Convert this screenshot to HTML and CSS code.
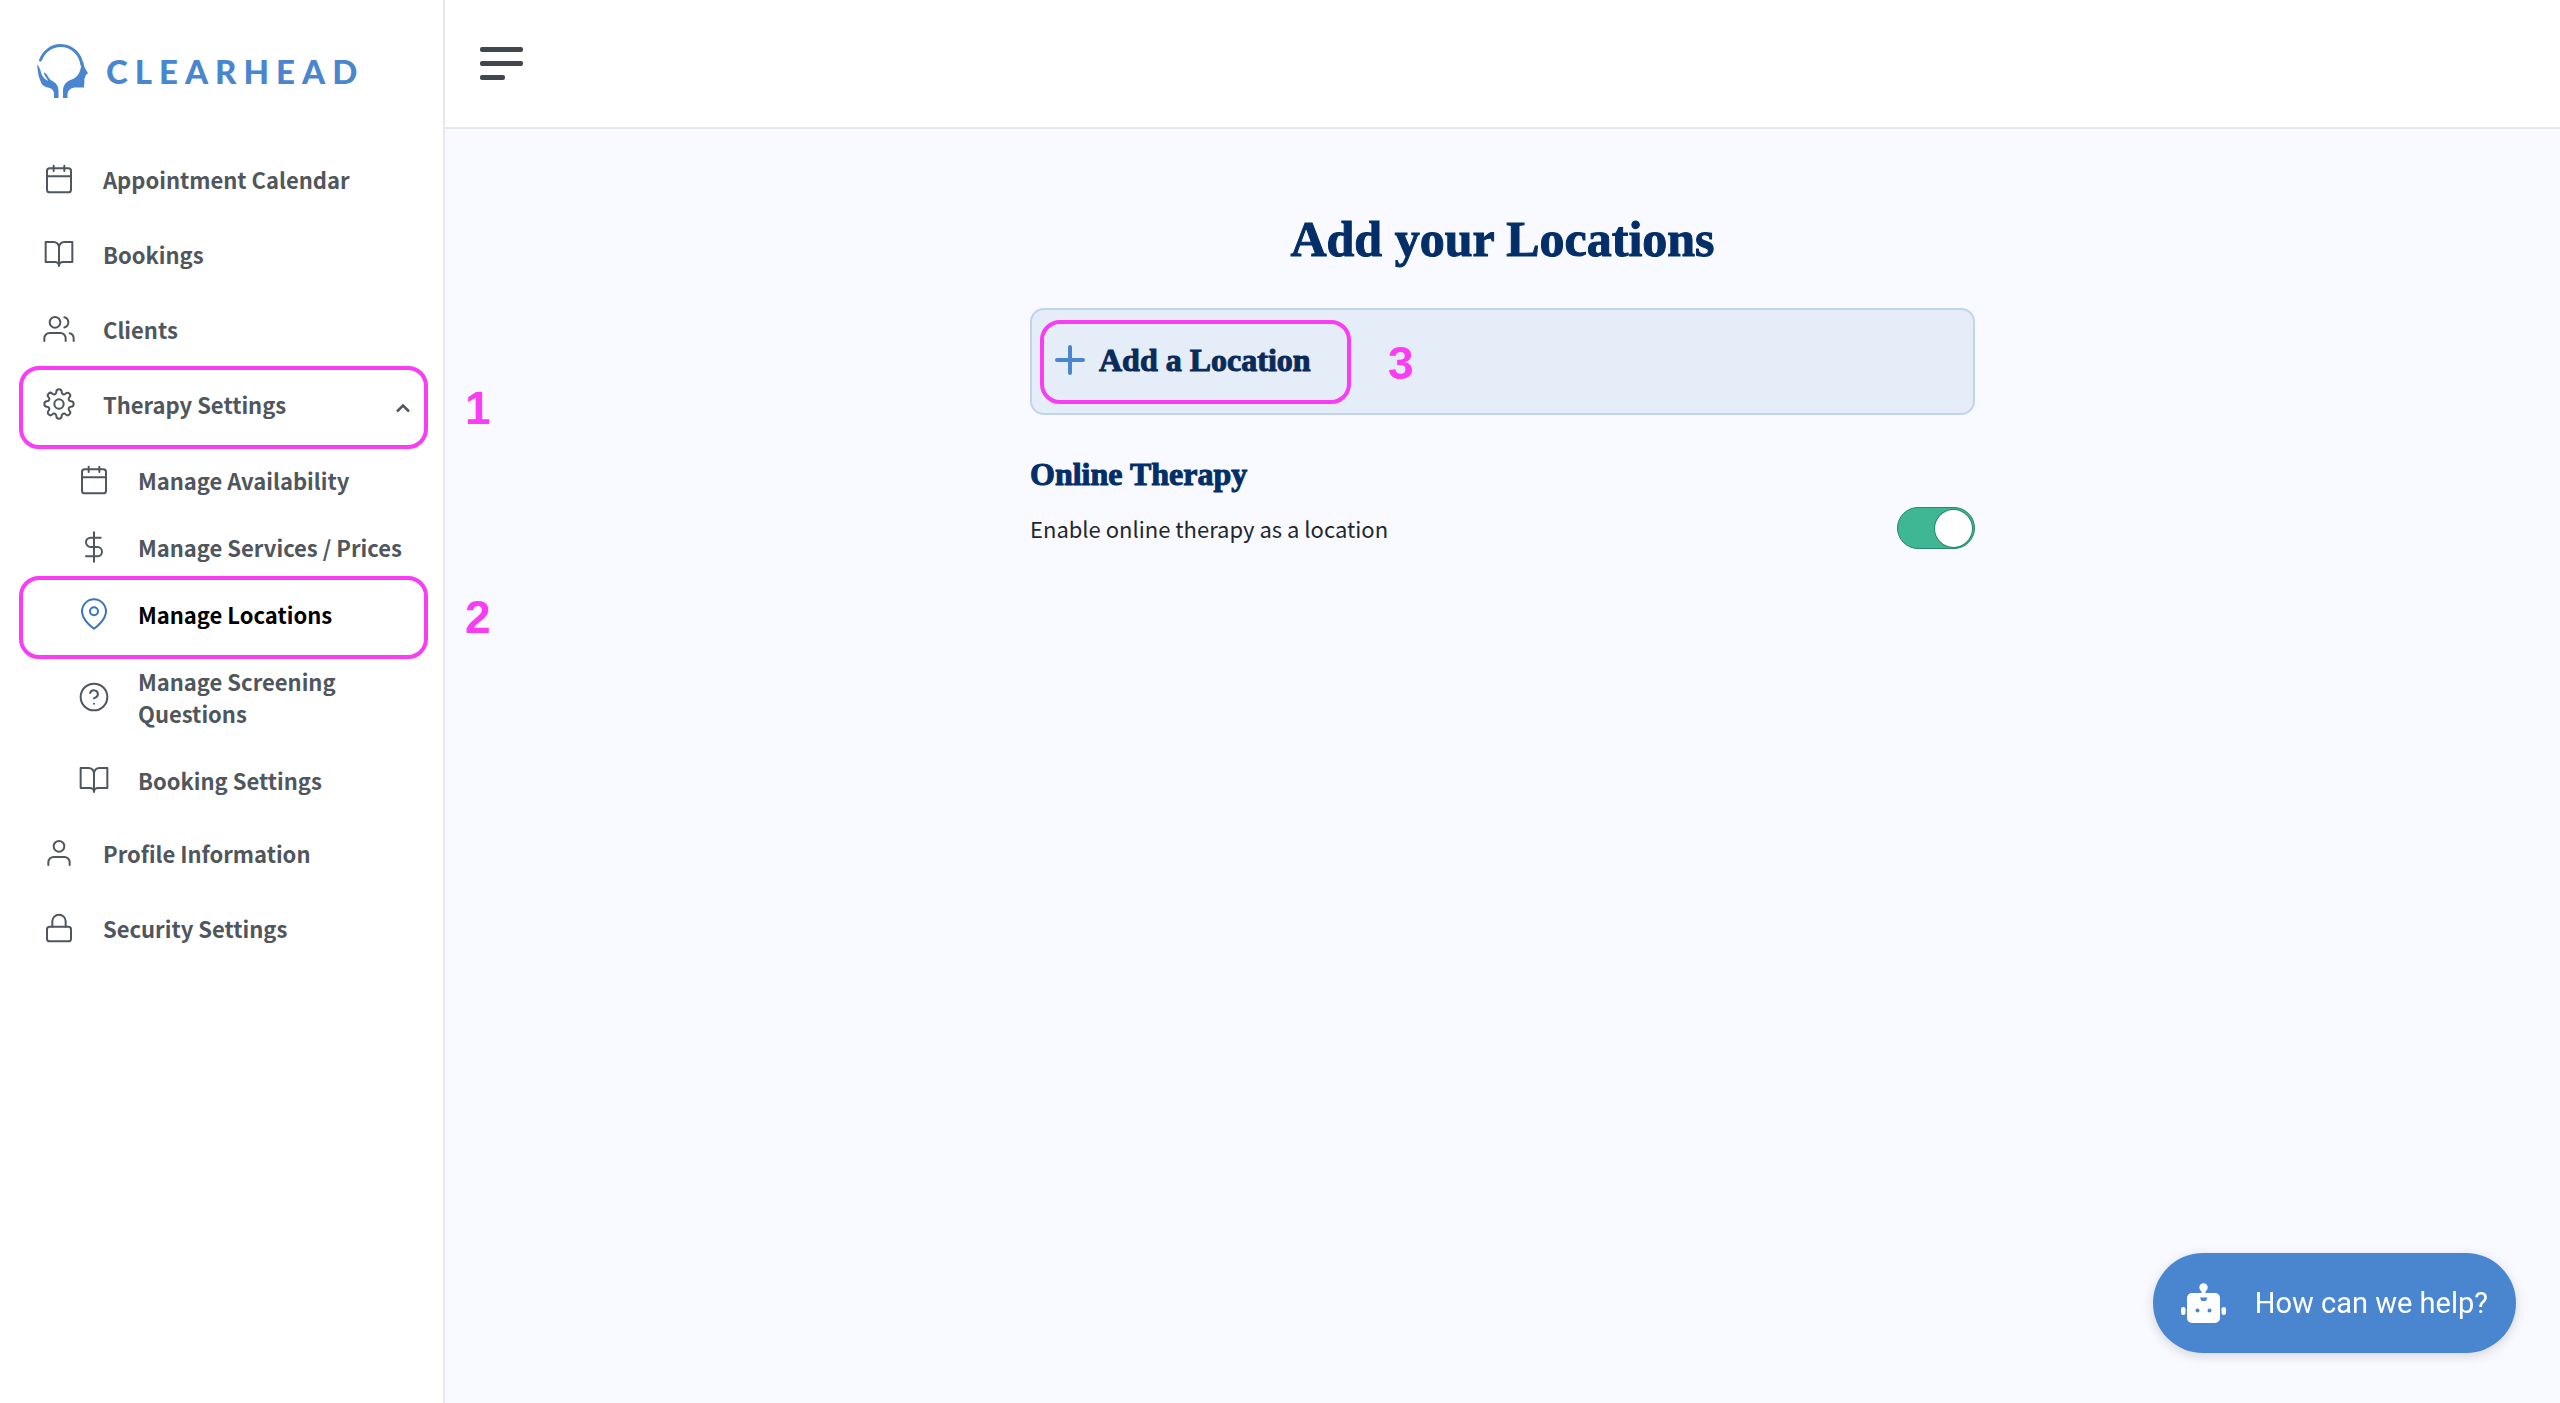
FILE: index.html
```html
<!doctype html>
<html lang="en">
  <head>
    <meta charset="utf-8">
    <meta name="viewport" content="width=device-width, initial-scale=1">
    <title>Clearhead - Manage Locations</title>
    <link rel="stylesheet" href="styles.css">
  </head>
  <body>

    <!-- feather icons shared by the menu -->
    <svg class="sprite" aria-hidden="true">
      <symbol id="calendar" viewBox="0 0 24 24"><rect x="3" y="4" width="18" height="18" rx="2"/><path d="M16 2v4M8 2v4M3 10h18"/></symbol>
      <symbol id="book" viewBox="0 0 24 24"><path d="M2 3h6a4 4 0 0 1 4 4v14a3 3 0 0 0-3-3H2zM22 3h-6a4 4 0 0 0-4 4v14a3 3 0 0 1 3-3h7z"/></symbol>
      <symbol id="users" viewBox="0 0 24 24"><path d="M17 21v-2a4 4 0 0 0-4-4H5a4 4 0 0 0-4 4v2M23 21v-2a4 4 0 0 0-3-3.870M16 3.130a4 4 0 0 1 0 7.750"/><circle cx="9" cy="7" r="4"/></symbol>
      <symbol id="gear" viewBox="0 0 24 24"><circle cx="12" cy="12" r="3.500"/><path d="M12 1c1.200 0 2 .900 2 2 0 1.600 1.900 2.400 3 1.200.8-.8 2-.8 2.800 0s.8 2 0 2.800C18.600 8.100 19.400 10 21 10c1.100 0 2 .8 2 2s-.9 2-2 2c-1.600 0-2.400 1.900-1.200 3 .8.8.8 2 0 2.800s-2 .8-2.800 0C15.900 18.600 14 19.400 14 21c0 1.100-.8 2-2 2s-2-.9-2-2c0-1.600-1.900-2.400-3-1.200-.8.8-2 .8-2.800 0s-.8-2 0-2.800C5.400 15.900 4.600 14 3 14c-1.100 0-2-.8-2-2s.9-2 2-2c1.600 0 2.400-1.900 1.200-3-.8-.8-.8-2 0-2.800s2-.8 2.800 0C8.100 5.400 10 4.600 10 3c0-1.100.8-2 2-2z"/></symbol>
      <symbol id="dollar" viewBox="0 0 24 24"><path d="M12 1v22M17 5H9.500a3.500 3.500 0 0 0 0 7h5a3.500 3.500 0 0 1 0 7H6"/></symbol>
      <symbol id="pin" viewBox="0 0 24 24"><path d="M21 10c0 7-9 13-9 13s-9-6-9-13a9 9 0 0 1 18 0z"/><circle cx="12" cy="10" r="3"/></symbol>
      <symbol id="help" viewBox="0 0 24 24"><circle cx="12" cy="12" r="10"/><path d="M9.090 9a3 3 0 0 1 5.830 1c0 2-3 3-3 3M12 17h.01"/></symbol>
      <symbol id="user" viewBox="0 0 24 24"><path d="M20 21v-2a4 4 0 0 0-4-4H8a4 4 0 0 0-4 4v2"/><circle cx="12" cy="7" r="4"/></symbol>
      <symbol id="lock" viewBox="0 0 24 24"><rect x="3" y="11" width="18" height="11" rx="2"/><path d="M7 11V7a5 5 0 0 1 10 0v4"/></symbol>
    </svg>

    <div class="app">
      <aside class="sidebar">
        <a class="logo" href="#">
          <svg class="logo-mark" viewBox="0 0 52 56" aria-hidden="true">
            <path d="M4.500 17C8 8 16 2.500 24.500 2.500 36 2.500 44.500 11 46 22" fill="none" stroke="currentColor" stroke-width="3" stroke-linecap="round"/>
            <path d="M47.200 18c.3 3 .8 5 2 7.500l2.600 4.500c.2 1-1.800 1.500-2.300 2.500.2 1.800-.8 2.300-1.200 3.500.5 2.500-.3 5-.3 8.500h-8c-5 0-8.500 2.500-8.500 7.500v3h-4.500v-7c0-5.500 2.500-9 7.500-11 5-1.500 9-5 10.500-13z"/>
            <path d="M1.200 21.500c2.500 2.500 3.300 6 4.300 9.500.8 2.500 3 5 6.500 7-.5-3-4-5-4-8.500 2.500.5 4 4.500 6.500 7.500 4.500 2 8 5 8 11v7h-4.500v-4c0-3-2-5.500-5-6.200-3.500-.6-6-2-7.200-3.800C4.500 38 2.200 33 2 29c-.3-3-.9-5-.8-7.500z"/>
          </svg>
          <span class="logo-text">CLEARHEAD</span>
        </a>

        <nav>
          <ul class="menu">
            <li><a class="item" href="#"><svg class="icon"><use href="#calendar"/></svg>Appointment Calendar</a></li>
            <li><a class="item" href="#"><svg class="icon"><use href="#book"/></svg>Bookings</a></li>
            <li><a class="item" href="#"><svg class="icon"><use href="#users"/></svg>Clients</a></li>
            <li class="marked">
              <button class="item" type="button" aria-expanded="true">
                <svg class="icon"><use href="#gear"/></svg>Therapy Settings
                <svg class="chevron" viewBox="0 0 16 10"><path d="M2 8.500l6-6 6 6"/></svg>
              </button>
              <span class="outline"></span><span class="step">1</span>
            </li>
          </ul>
          <ul class="menu submenu">
            <li><a class="item" href="#"><svg class="icon"><use href="#calendar"/></svg>Manage Availability</a></li>
            <li><a class="item" href="#"><svg class="icon"><use href="#dollar"/></svg>Manage Services / Prices</a></li>
            <li class="marked">
              <a class="item active" href="#"><svg class="icon"><use href="#pin"/></svg>Manage Locations</a>
              <span class="outline"></span><span class="step">2</span>
            </li>
            <li><a class="item" href="#"><svg class="icon"><use href="#help"/></svg>Manage Screening Questions</a></li>
            <li><a class="item" href="#"><svg class="icon"><use href="#book"/></svg>Booking Settings</a></li>
          </ul>
          <ul class="menu">
            <li><a class="item" href="#"><svg class="icon"><use href="#user"/></svg>Profile Information</a></li>
            <li><a class="item" href="#"><svg class="icon"><use href="#lock"/></svg>Security Settings</a></li>
          </ul>
        </nav>
      </aside>

      <div class="page">
        <header class="topbar">
          <button class="burger" type="button" aria-label="Toggle menu"><span></span><span></span><span></span></button>
        </header>

        <main class="content">
          <h1>Add your Locations</h1>

          <div class="card">
            <div class="marked">
              <button class="add" type="button">
                <svg class="plus" viewBox="0 0 30 30"><path d="M15 2v26M2 15h26"/></svg>Add a Location
              </button>
              <span class="outline"></span><span class="step">3</span>
            </div>
          </div>

          <h2>Online Therapy</h2>
          <div class="setting">
            <label for="online">Enable online therapy as a location</label>
            <input class="switch" type="checkbox" role="switch" id="online" checked>
          </div>
        </main>
      </div>
    </div>

    <button class="chat" type="button">
      <svg class="robot" viewBox="0 0 45 40" aria-hidden="true">
        <circle cx="22.500" cy="4.500" r="4.200"/>
        <rect x="20.500" y="6" width="4" height="6"/>
        <rect x="6" y="10" width="33" height="30" rx="5"/>
        <rect x="0" y="24" width="4.500" height="8" rx="2.200"/>
        <rect x="40.500" y="24" width="4.500" height="8" rx="2.200"/>
        <g class="face"><path d="M19 14.500h7.500l-1.500 3.500h-4.500z"/><circle cx="16.500" cy="27.500" r="2"/><circle cx="28.500" cy="27.500" r="2"/></g>
      </svg>
      How can we help?
    </button>

  </body>
</html>
```
FILE: styles.css
```css
* {
  box-sizing: border-box;
}

body {
  margin: 0;
  background: #f8faff;
  color: #23272c;
  font: 22px/32px 'Noto Sans CJK SC', 'Open Sans', sans-serif;
}

button {
  padding: 0;
  border: 0;
  background: none;
  font: inherit;
  color: inherit;
  text-align: left;
}

a {
  color: inherit;
  text-decoration: none;
}

h1, h2, .add {
  font-family: 'Liberation Serif', serif;
  font-weight: bold;
  color: #032e67;
  -webkit-text-stroke: 1px;
}

.sprite {
  position: absolute;
  width: 0;
  height: 0;
}

.app {
  display: flex;
  min-height: 100vh;
}

/* sidebar */

.sidebar {
  flex: none;
  width: 445px;
  background: #fff;
  border-right: 2px solid #e6e8ec;
}

.logo {
  display: flex;
  align-items: center;
  gap: 18px;
  padding: 43px 36px 0;
  color: #4a86cf;
}

.logo-mark {
  width: 52px;
  height: 56px;
  fill: currentColor;
}

.logo-text {
  font: 900 33px/56px Lato, sans-serif;
  letter-spacing: 7px;
}

nav {
  padding-top: 43px;
}

.menu {
  margin: 0;
  padding: 0;
  list-style: none;
}

.submenu {
  margin: 5px 0 2px;
}

.item {
  display: flex;
  align-items: center;
  gap: 28px;
  width: 100%;
  min-height: 75px;
  padding: 17px 28px 18px 43px;
  color: #50565d;
  font-weight: 600;
}

.submenu .item {
  min-height: 67px;
  padding-left: 78px;
}

.icon {
  flex: none;
  width: 32px;
  height: 32px;
  fill: none;
  stroke: currentColor;
  stroke-width: 1.5;
  stroke-linecap: round;
  stroke-linejoin: round;
}

.item.active {
  color: #000;
}

.active .icon {
  color: #3a74ba;
}

.chevron {
  width: 16px;
  height: 10px;
  margin: 8px 4px 0 auto;
  fill: none;
  stroke: #50565d;
  stroke-width: 2.5;
}

/* numbered callouts */

.marked {
  position: relative;
}

.outline {
  position: absolute;
  top: -1px;
  left: 19px;
  width: 409px;
  height: 83px;
  border: 4px solid #fb3cf5;
  border-radius: 20px;
  pointer-events: none;
}

.step {
  position: absolute;
  top: 17px;
  left: 465px;
  color: #fb3cf5;
  font: bold 46px/48px 'Liberation Sans', Arial, sans-serif;
}

.submenu .outline {
  top: -5px;
}

.submenu .step {
  top: 12px;
}

/* page */

.page {
  flex: 1;
}

.topbar {
  display: flex;
  align-items: center;
  height: 129px;
  padding-left: 35px;
  background: #fff;
  border-bottom: 2px solid #e6e8ec;
}

.burger {
  display: grid;
  gap: 9px;
}

.burger span {
  width: 43px;
  height: 5px;
  border-radius: 2px;
  background: #42474d;
}

.burger span:last-child {
  width: 25px;
}

.content {
  max-width: 945px;
  margin: 0 auto;
  padding-top: 78px;
}

h1 {
  margin: 0 0 37px;
  font-size: 50px;
  line-height: 64px;
  text-align: center;
}

.card {
  display: flex;
  padding: 10px 8px 9px;
  background: #e5edf8;
  border: 2px solid #c1d4eb;
  border-radius: 14px;
}

.add {
  display: flex;
  align-items: center;
  gap: 14px;
  width: 311px;
  height: 84px;
  padding: 0 0 4px 15px;
  color: #0a2a5a;
  font-size: 32px;
}

.plus {
  width: 30px;
  height: 30px;
  fill: none;
  stroke: #4a86cf;
  stroke-width: 4;
  stroke-linecap: round;
}

.card .outline {
  top: 0;
  left: 0;
  width: 100%;
  height: 100%;
}

.card .step {
  top: 19px;
  left: 348px;
}

h2 {
  margin: 39px 0 13px;
  font-size: 32px;
  line-height: 40px;
}

.setting {
  display: flex;
  align-items: center;
  justify-content: space-between;
}

.switch {
  appearance: none;
  display: flex;
  align-items: center;
  width: 78px;
  height: 42px;
  margin: 0;
  padding: 0 2px;
  background: #b8bec6;
  border: 1px solid #8d949c;
  border-radius: 21px;
}

.switch::before {
  content: '';
  width: 37px;
  height: 37px;
  border-radius: 50%;
  background: #fff;
}

.switch:checked {
  justify-content: flex-end;
  background: #3fb795;
  border-color: #268a6b;
}

.switch:checked::before {
  box-shadow: 0 0 0 1px #268a6b;
}

/* help bubble */

.chat {
  position: fixed;
  right: 44px;
  bottom: 50px;
  display: flex;
  align-items: center;
  gap: 29px;
  height: 100px;
  padding: 0 28px;
  border-radius: 50px;
  background: #4a86cf;
  box-shadow: 0 3px 12px rgba(0, 0, 0, 0.15);
  color: #fff;
  font-family: Roboto, sans-serif;
  font-size: 29px;
}

.robot {
  width: 45px;
  height: 40px;
  fill: #fff;
}

.face {
  fill: #4a86cf;
}
```
